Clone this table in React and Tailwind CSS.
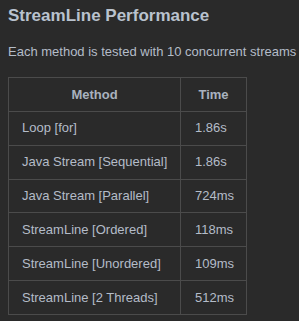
export default function App() {
  const rows = [
    ["Loop [for]", "1.86s"],
    ["Java Stream [Sequential]", "1.86s"],
    ["Java Stream [Parallel]", "724ms"],
    ["StreamLine [Ordered]", "118ms"],
    ["StreamLine [Unordered]", "109ms"],
    ["StreamLine [2 Threads]", "512ms"],
  ];
  return (
    <div className="w-[299px] h-[321px] overflow-hidden bg-[#2a2a2a] text-[#b4bcc8] font-['Liberation_Sans',Arial,sans-serif] px-[8px]">
      <h1 className="pt-[5px] text-[17px] leading-[22px] font-bold text-[#b9c2ce]">StreamLine Performance</h1>
      <p className="mt-[16px] text-[13px] leading-[17px] whitespace-nowrap">Each method is tested with 10 concurrent streams</p>
      <table className="mt-[17px] border-collapse text-[13px] leading-[20px]">
        <thead>
          <tr>
            <th className="border border-[#4b4b4b] w-[172px] h-[34px] font-bold text-center text-[#a9b2bf]">Method</th>
            <th className="border border-[#4b4b4b] w-[66px] h-[34px] font-bold text-center text-[#a9b2bf]">Time</th>
          </tr>
        </thead>
        <tbody>
          {rows.map(([m, t]) => (
            <tr key={m}>
              <td className="border border-[#4b4b4b] h-[33.83px] pl-[13px] text-left">{m}</td>
              <td className="border border-[#4b4b4b] h-[33.83px] pl-[14px] text-left">{t}</td>
            </tr>
          ))}
        </tbody>
      </table>
    </div>
  );
}
